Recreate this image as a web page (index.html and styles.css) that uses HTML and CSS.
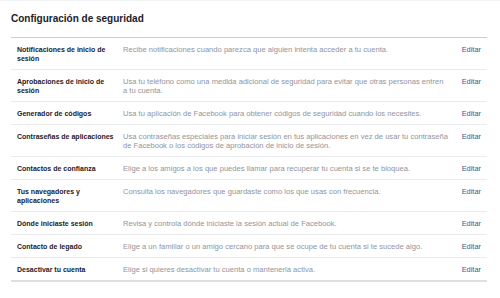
FILE: index.html
```html
<!DOCTYPE html>
<html lang="es">
<head>
  <meta charset="UTF-8">
  <title>Configuración de seguridad</title>
  <link rel="stylesheet" href="styles.css">
</head>
<body>

  <div class="panel">
    <h1>Configuración de seguridad</h1>

    <ul class="settings">
      <li>
        <div class="label">Notificaciones de inicio de sesión</div>
        <div class="desc">Recibe notificaciones cuando parezca que alguien intenta acceder a tu cuenta.</div>
        <a class="edit" href="#">Editar</a>
      </li>
      <li>
        <div class="label">Aprobaciones de inicio de sesión</div>
        <div class="desc">Usa tu teléfono como una medida adicional de seguridad para evitar que otras personas entren a tu cuenta.</div>
        <a class="edit" href="#">Editar</a>
      </li>
      <li>
        <div class="label">Generador de códigos</div>
        <div class="desc">Usa tu aplicación de Facebook para obtener códigos de seguridad cuando los necesites.</div>
        <a class="edit" href="#">Editar</a>
      </li>
      <li>
        <div class="label">Contraseñas de aplicaciones</div>
        <div class="desc">Usa contraseñas especiales para iniciar sesión en tus aplicaciones en vez de usar tu contraseña de Facebook o los códigos de aprobación de inicio de sesión.</div>
        <a class="edit" href="#">Editar</a>
      </li>
      <li>
        <div class="label">Contactos de confianza</div>
        <div class="desc">Elige a los amigos a los que puedes llamar para recuperar tu cuenta si se te bloquea.</div>
        <a class="edit" href="#">Editar</a>
      </li>
      <li>
        <div class="label">Tus navegadores y aplicaciones</div>
        <div class="desc">Consulta los navegadores que guardaste como los que usas con frecuencia.</div>
        <a class="edit" href="#">Editar</a>
      </li>
      <li>
        <div class="label">Dónde iniciaste sesión</div>
        <div class="desc">Revisa y controla dónde iniciaste la sesión actual de Facebook.</div>
        <a class="edit" href="#">Editar</a>
      </li>
      <li>
        <div class="label">Contacto de legado</div>
        <div class="desc">Elige a un familiar o un amigo cercano para que se ocupe de tu cuenta si te sucede algo.</div>
        <a class="edit" href="#">Editar</a>
      </li>
      <li>
        <div class="label">Desactivar tu cuenta</div>
        <div class="desc">Elige si quieres desactivar tu cuenta o mantenerla activa.</div>
        <a class="edit" href="#">Editar</a>
      </li>
    </ul>
  </div>

</body>
</html>
```

FILE: styles.css
```css
body {
  margin: 0;
  background: #fff;
  font-family: 'Liberation Sans', Arial, sans-serif;
  color: #1d2129;
  border-top: 1px solid #f2f3f5;
}
.panel {
  margin-left: 11px;
  width: 476px;
}
h1 {
  margin: 0;
  padding: 9px 0 10px;
  font-size: 10px;
  line-height: 17px;
  font-weight: bold;
  border-bottom: 1px solid #c9ccd1;
}
.settings {
  list-style: none;
  margin: 0;
  padding: 0;
  border-bottom: 2px solid #dddfe2;
}
.settings li {
  display: grid;
  grid-template-columns: 100px 1fr auto;
  padding: 7px 6px 6px;
  font-size: 7px;
  line-height: 9px;
  border-top: 1px solid #e9ebee;
}
.settings li:first-child {
  border-top: none;
}
.label {
  font-weight: bold;
}
.desc {
  color: #90949c;
  font-size: 7.6px;
  padding: 0 12px 0 6px;
}
.edit {
  color: #365899;
  font-size: 7.4px;
  text-decoration: none;
}
```
